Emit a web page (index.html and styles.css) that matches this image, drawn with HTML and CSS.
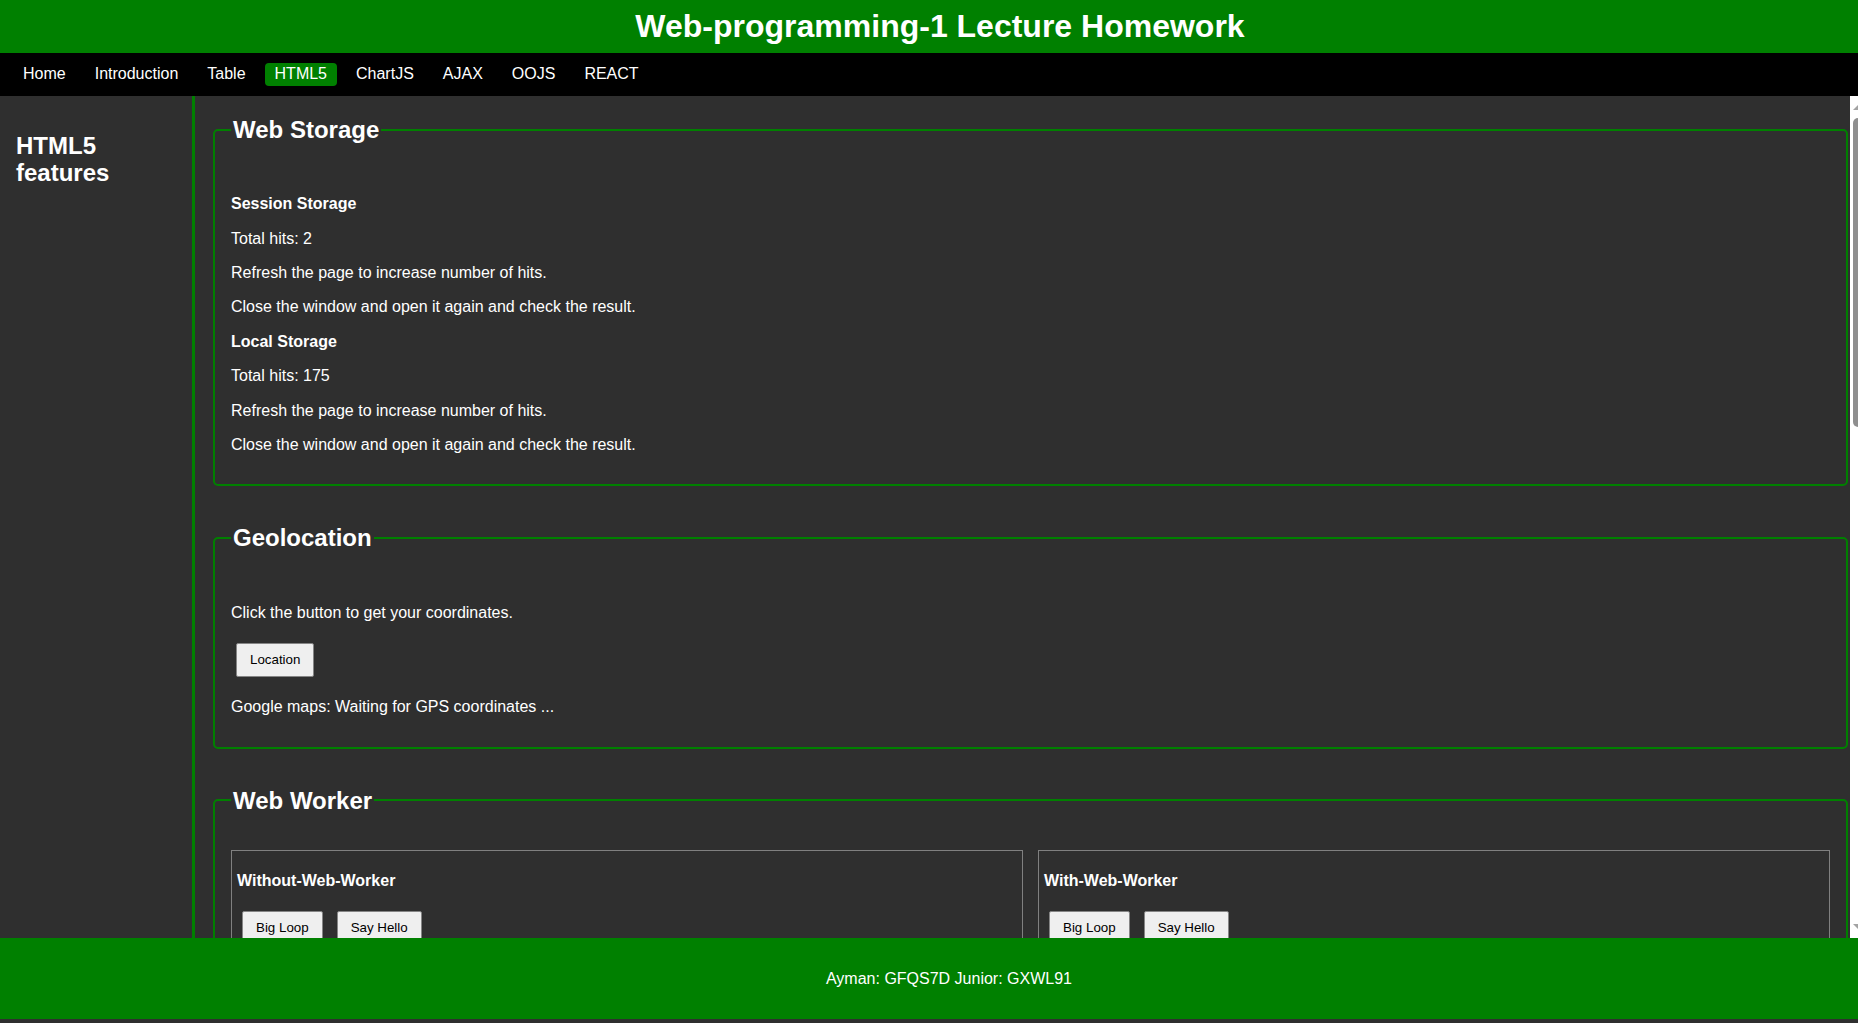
FILE: index.html
```html
<!DOCTYPE html>
<html lang="en">
<head>
<meta charset="utf-8">
<title>Web-programming-1 Lecture Homework</title>
<link rel="stylesheet" href="styles.css">
</head>
<body>
<header class="site-header">
  <h1 class="site-title">Web-programming-1 Lecture Homework</h1>
</header>
<nav class="site-nav">
  <a class="nav-link" href="#">Home</a>
  <a class="nav-link" href="#">Introduction</a>
  <a class="nav-link" href="#">Table</a>
  <a class="nav-link active" href="#">HTML5</a>
  <a class="nav-link" href="#">ChartJS</a>
  <a class="nav-link" href="#">AJAX</a>
  <a class="nav-link" href="#">OOJS</a>
  <a class="nav-link" href="#">REACT</a>
</nav>
<div class="layout">
  <aside class="sidebar">
    <h2 class="sidebar-title">HTML5 features</h2>
  </aside>
  <main class="content">
    <fieldset class="panel">
      <legend class="panel-legend"><h2 class="panel-title">Web Storage</h2></legend>
      <p><strong>Session Storage</strong></p>
      <p>Total hits: 2</p>
      <p>Refresh the page to increase number of hits.</p>
      <p>Close the window and open it again and check the result.</p>
      <p><strong>Local Storage</strong></p>
      <p>Total hits: 175</p>
      <p>Refresh the page to increase number of hits.</p>
      <p>Close the window and open it again and check the result.</p>
    </fieldset>

    <fieldset class="panel">
      <legend class="panel-legend"><h2 class="panel-title">Geolocation</h2></legend>
      <p>Click the button to get your coordinates.</p>
      <div class="btn-row"><button class="btn">Location</button></div>
      <p>Google maps: Waiting for GPS coordinates ...</p>
    </fieldset>

    <fieldset class="panel">
      <legend class="panel-legend"><h2 class="panel-title">Web Worker</h2></legend>
      <div class="worker-grid">
        <div class="worker-box">
          <p><strong>Without-Web-Worker</strong></p>
          <div class="btn-row"><button class="btn">Big Loop</button><button class="btn">Say Hello</button></div>
          <p>Result: -</p>
        </div>
        <div class="worker-box">
          <p><strong>With-Web-Worker</strong></p>
          <div class="btn-row"><button class="btn">Big Loop</button><button class="btn">Say Hello</button></div>
          <p>Result: -</p>
        </div>
      </div>
    </fieldset>

    <fieldset class="panel">
      <legend class="panel-legend"><h2 class="panel-title">Server-Sent Events</h2></legend>
      <p>Server time: waiting for the server ...</p>
    </fieldset>
  </main>
  <div class="scroll-track" aria-hidden="true">
    <div class="scroll-up"><span class="arrow-up"></span></div>
    <div class="scroll-thumb"></div>
    <div class="scroll-space"></div>
    <div class="scroll-down"><span class="arrow-down"></span></div>
  </div>
</div>
<footer class="site-footer">Ayman: GFQS7D Junior: GXWL91</footer>
</body>
</html>
```
FILE: styles.css
```css
* {
  box-sizing: border-box;
}

html, body {
  height: 100%;
}

body {
  margin: 0;
  padding-bottom: 4px;
  height: 100vh;
  overflow: hidden;
  display: flex;
  flex-direction: column;
  background: #2f2f2f;
  color: #fff;
  font-family: "Liberation Sans", Arial, sans-serif;
  font-size: 16px;
}

.site-header {
  flex: none;
  background: #008000;
  padding: 8px 0 8px 22px;
  text-align: center;
}

.site-title {
  margin: 0;
  font-size: 32px;
  font-weight: bold;
  line-height: 36.8px;
}

.site-nav {
  flex: none;
  height: 43px;
  background: #000;
  display: flex;
  align-items: center;
  gap: 9px;
  padding-left: 13px;
}

.nav-link {
  color: #fff;
  text-decoration: none;
  padding: 2.5px 10px;
  border-radius: 4px;
  line-height: 18.4px;
}

.nav-link.active {
  background: #008000;
}

.layout {
  flex: 1;
  min-height: 0;
  display: flex;
}

.sidebar {
  flex: none;
  width: 195px;
  padding: 16px 16px 0;
  border-right: 3px solid #008000;
}

.sidebar-title {
  margin: 19.92px 0;
  font-size: 24px;
  line-height: 27.6px;
}

.content {
  flex: 1;
  min-width: 0;
  overflow: hidden;
  padding: 0 2px 0 18px;
}

.scroll-track {
  flex: none;
  width: 8px;
  background: #fff;
  display: flex;
  flex-direction: column;
}

.scroll-up {
  height: 22px;
  padding: 9px 0 0 3px;
}

.arrow-up {
  display: block;
  width: 0;
  height: 0;
  border-left: 5px solid transparent;
  border-bottom: 5px solid #a3a3a3;
}

.scroll-thumb {
  height: 309px;
  margin-left: 3px;
  background: #8f8f8f;
  border-radius: 5px 0 0 5px;
}

.scroll-space {
  flex: 1;
}

.scroll-down {
  height: 22px;
  padding: 8px 0 0 3px;
}

.arrow-down {
  display: block;
  width: 0;
  height: 0;
  border-left: 5px solid transparent;
  border-top: 5px solid #a3a3a3;
}

.panel {
  margin: 0 0 18px;
  padding: 16px 16px 14px;
  min-width: 0;
  border: 2px solid #008000;
  border-radius: 5px;
}

.panel-legend {
  padding: 0 2px;
}

.panel-title {
  margin: 19.92px 0;
  font-size: 24px;
  line-height: 27.6px;
}

p {
  margin: 16px 0;
  line-height: 18.4px;
}

.btn-row {
  display: flex;
  gap: 4px;
}

.btn {
  margin: 5px;
  padding: 8px 13px;
  font-family: "Liberation Sans", Arial, sans-serif;
  font-size: 13.333px;
  line-height: 16px;
  color: #000;
  background: #efefef;
  border: 1px solid #858585;
  border-radius: 2px;
}

.worker-grid {
  display: grid;
  grid-template-columns: 1fr 1fr;
  gap: 15px;
}

.worker-box {
  border: 1px solid #808080;
  padding: 5px;
}

.site-footer {
  flex: none;
  height: 81px;
  background: #008000;
  display: flex;
  align-items: center;
  justify-content: center;
  padding-left: 40px;
}
```
